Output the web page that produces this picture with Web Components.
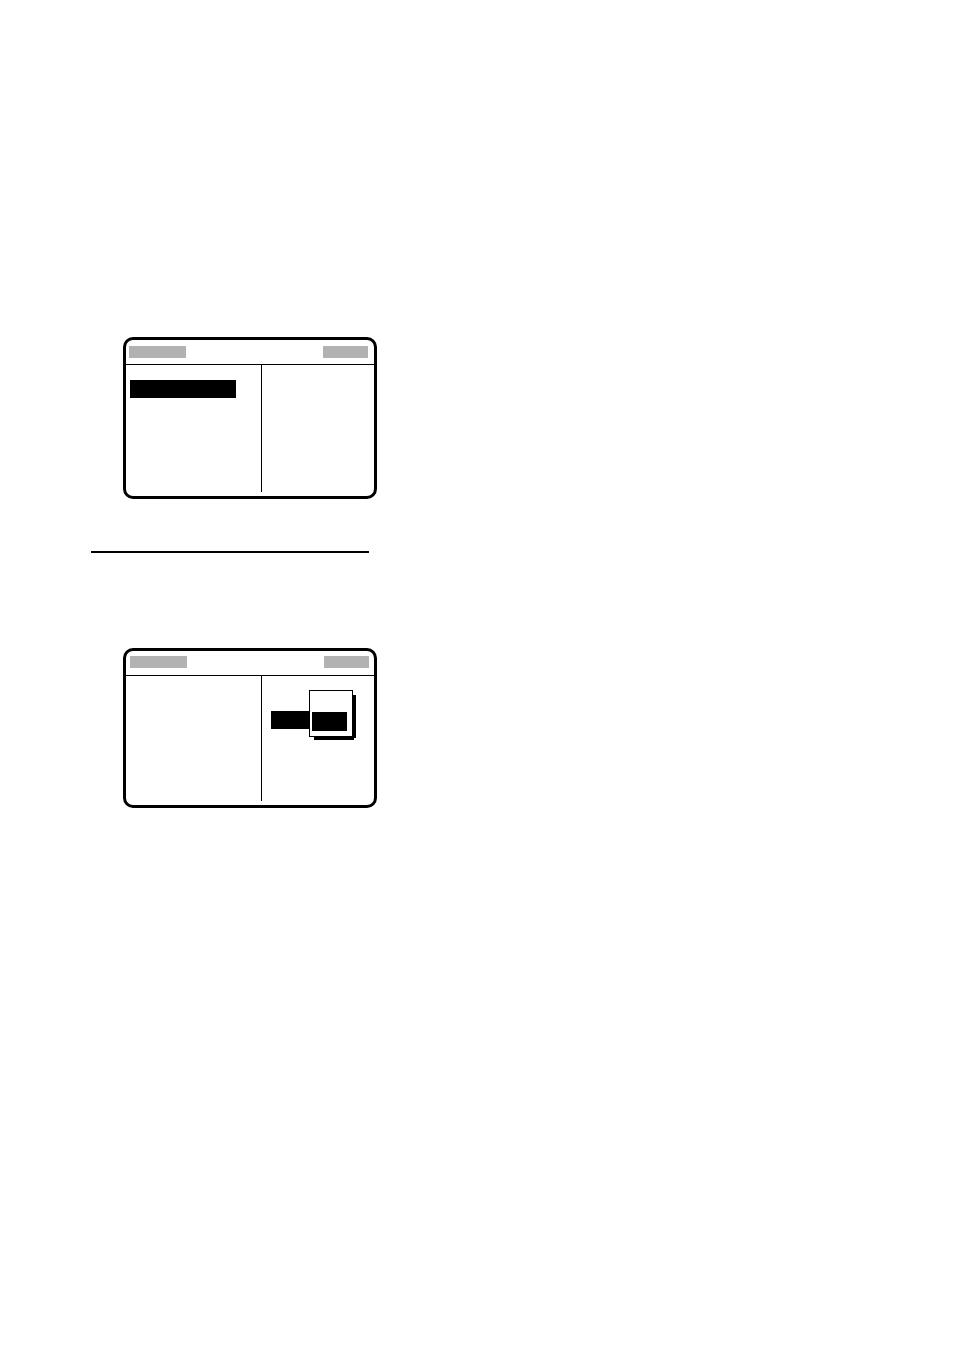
<!DOCTYPE html>
<html lang="en">
<head>
<meta charset="utf-8">
<meta name="viewport" content="width=device-width, initial-scale=1">
<title>Display</title>
<style>
  body {
    margin: 0;
    background: #fff;
    color: #000;
    font-family: "Liberation Sans", Arial, sans-serif;
  }
</style>
</head>
<body>
<manual-page>
  <lcd-screen>
    <lcd-bar slot="title" size="wide"></lcd-bar>
    <lcd-bar slot="status"></lcd-bar>
    <lcd-row slot="left" selected></lcd-row>
    <lcd-row slot="left"></lcd-row>
    <lcd-row slot="left"></lcd-row>
    <lcd-row slot="left"></lcd-row>
    <lcd-row slot="left"></lcd-row>
  </lcd-screen>
  <section-rule></section-rule>
  <lcd-screen compact>
    <lcd-bar slot="title" size="wide"></lcd-bar>
    <lcd-bar slot="status"></lcd-bar>
    <lcd-row slot="right"></lcd-row>
    <lcd-row slot="right" selected></lcd-row>
    <lcd-row slot="right"></lcd-row>
    <lcd-row slot="right"></lcd-row>
    <lcd-row slot="right"></lcd-row>
    <lcd-menu slot="right">
      <lcd-row></lcd-row>
      <lcd-row selected></lcd-row>
    </lcd-menu>
  </lcd-screen>
</manual-page>

<script>
class BaseElement extends HTMLElement {
  constructor() {
    super();
    this.attachShadow({ mode: 'open' });
  }

  getStyles() {
    return '';
  }

  getMarkup() {
    return '';
  }

  connectedCallback() {
    const template = document.createElement('template');
    template.innerHTML = `<style>${this.getStyles()}</style>${this.getMarkup()}`;
    this.shadowRoot.replaceChildren(template.content.cloneNode(true));
  }
}

class ManualPage extends BaseElement {
  getStyles() {
    return `
      :host {
        display: grid;
        grid-template-columns: minmax(0, 286px) 1fr;
        box-sizing: border-box;
        min-height: 100vh;
        padding: 337px 91px 0;
      }

      main {
        display: flex;
        flex-direction: column;
      }

      ::slotted(lcd-screen) {
        margin-left: 32px;
      }

      ::slotted(section-rule) {
        margin: 52px 8px 95px 0;
      }
    `;
  }

  getMarkup() {
    return '<main><slot></slot></main>';
  }
}

class SectionRule extends BaseElement {
  getStyles() {
    return `
      :host {
        display: block;
        border-top: 2px solid #000;
      }
    `;
  }
}

// header with two grey bars, then two columns split by a thin line
class LcdScreen extends BaseElement {
  getStyles() {
    return `
      :host {
        display: block;
        border: 3px solid #000;
        border-radius: 10px;
        padding-bottom: 4px;
      }

      header {
        display: flex;
        justify-content: space-between;
        padding: 6px 6px 6px 3px;
        border-bottom: 1px solid #000;
      }

      .columns {
        display: grid;
        grid-template-columns: 135fr 113fr;
      }

      .column {
        display: flex;
        flex-direction: column;
        gap: 2px;
        padding: 15px 4px 14px;
      }

      .left {
        padding-right: 25px;
      }

      .right {
        position: relative;
        border-left: 1px solid #000;
        padding-left: 9px;
      }

      :host([compact]) header {
        padding: 5px 5px 7px 4px;
      }

      :host([compact]) .column {
        padding-bottom: 12px;
      }
    `;
  }

  getMarkup() {
    return `
      <header>
        <slot name="title"></slot>
        <slot name="status"></slot>
      </header>
      <div class="columns">
        <div class="column left"><slot name="left"></slot></div>
        <div class="column right"><slot name="right"></slot></div>
      </div>
    `;
  }
}

class LcdBar extends BaseElement {
  getStyles() {
    return `
      :host {
        display: block;
        width: 45px;
        height: 12px;
        background: #b2b2b2;
      }

      :host([size="wide"]) {
        width: 57px;
      }
    `;
  }
}

class LcdRow extends BaseElement {
  getStyles() {
    return `
      :host {
        display: block;
        height: 18px;
      }

      :host([slot="right"]) {
        width: 40px;
      }

      :host([selected]) {
        background: #000;
      }
    `;
  }
}

// pop-up list that lies over the right column
class LcdMenu extends BaseElement {
  getStyles() {
    return `
      :host {
        position: absolute;
        top: 14px;
        left: 47px;
        display: flex;
        flex-direction: column;
        box-sizing: border-box;
        width: 44px;
        padding: 2px 5px 5px 2px;
        border: 1px solid #000;
        background: #fff;
        box-shadow: 5px 3px 0 -2px #000, 3px 5px 0 -2px #000;
      }

      ::slotted(lcd-row) {
        height: 19px;
      }
    `;
  }

  getMarkup() {
    return '<slot></slot>';
  }
}

customElements.define('manual-page', ManualPage);
customElements.define('section-rule', SectionRule);
customElements.define('lcd-screen', LcdScreen);
customElements.define('lcd-bar', LcdBar);
customElements.define('lcd-row', LcdRow);
customElements.define('lcd-menu', LcdMenu);
</script>
</body>
</html>
